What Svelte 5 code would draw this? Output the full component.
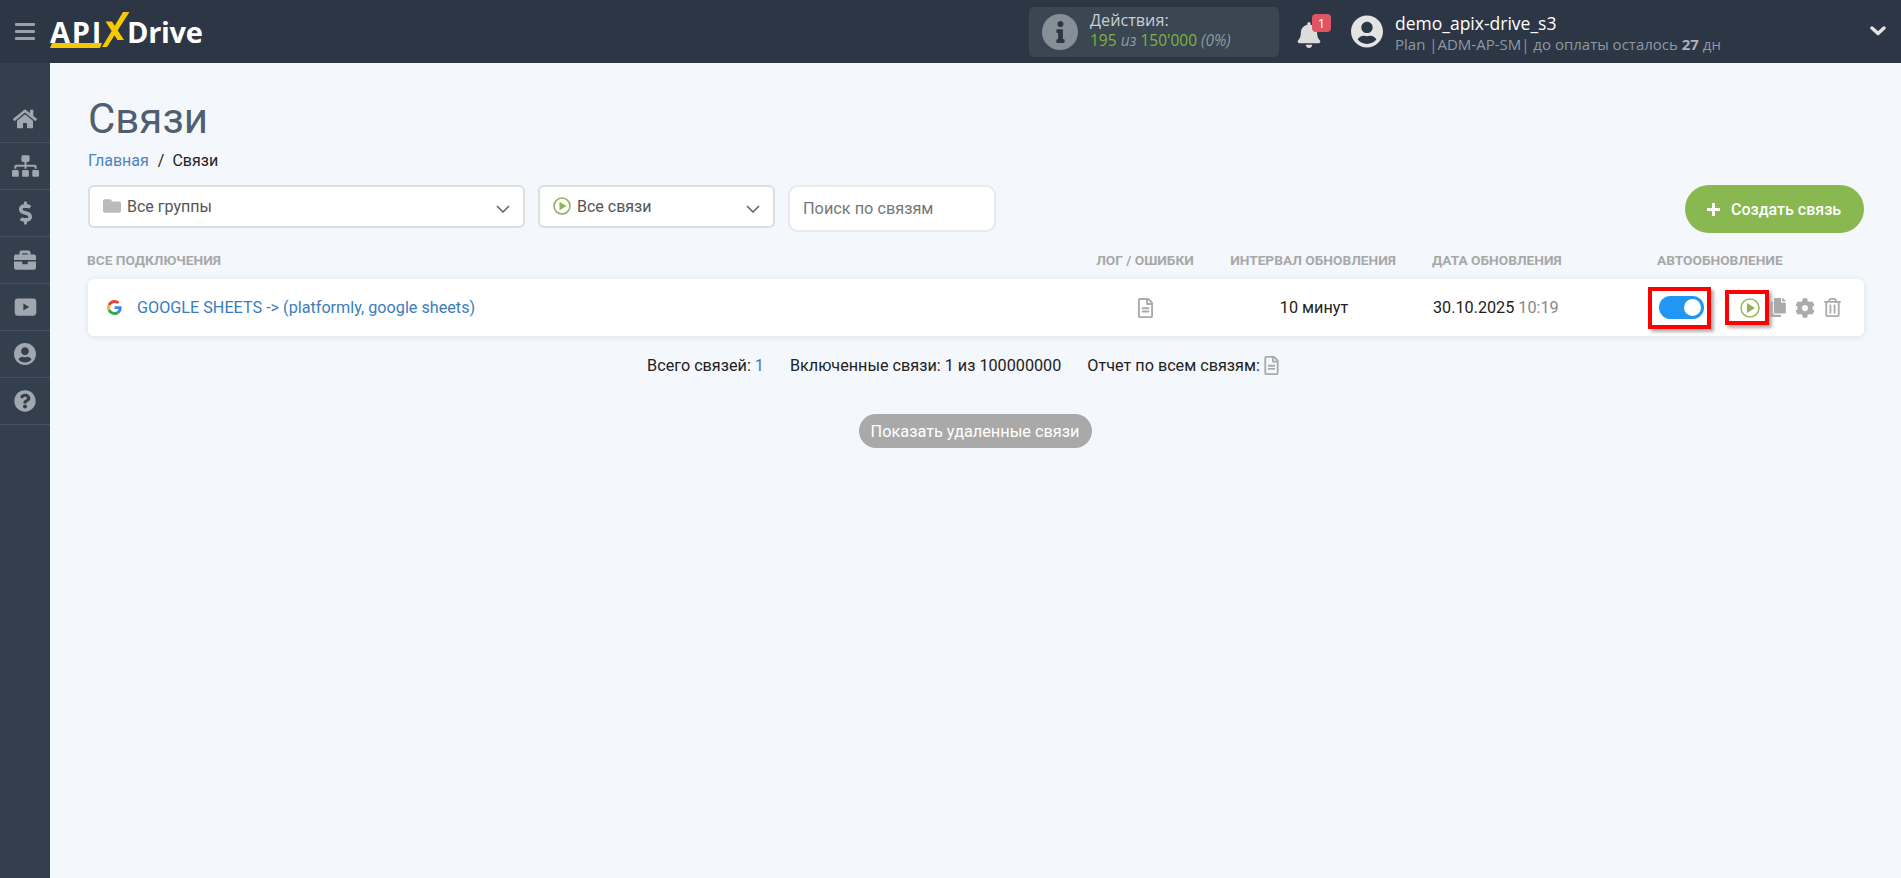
<script>
  const nav = [
    { vb: '0 0 576 512', w: 24, d: 'M280.37 148.26L96 300.11V464a16 16 0 0 0 16 16l112.06-.29a16 16 0 0 0 15.92-16V368a16 16 0 0 1 16-16h64a16 16 0 0 1 16 16v95.64a16 16 0 0 0 16 16.05L464 480a16 16 0 0 0 16-16V300L295.67 148.26a12.19 12.19 0 0 0-15.3 0zM571.6 251.47L488 182.56V44.05a12 12 0 0 0-12-12h-56a12 12 0 0 0-12 12v72.61L318.47 43a48 48 0 0 0-61 0L4.34 251.47a12 12 0 0 0-1.6 16.9l25.5 31A12 12 0 0 0 45.15 301l235.22-193.74a12.19 12.19 0 0 1 15.3 0L530.9 301a12 12 0 0 0 16.9-1.6l25.5-31a12 12 0 0 0-1.7-16.93z' },
    { vb: '0 0 640 512', w: 27, d: 'M128 352H32c-17.67 0-32 14.33-32 32v96c0 17.67 14.33 32 32 32h96c17.67 0 32-14.33 32-32v-96c0-17.67-14.33-32-32-32zm-24-80h192v48h48v-48h192v48h48v-57.59c0-21.17-17.23-38.41-38.41-38.41H344v-64h40c17.67 0 32-14.33 32-32V32c0-17.67-14.33-32-32-32H256c-17.67 0-32 14.33-32 32v96c0 17.67 14.33 32 32 32h40v64H94.41C73.23 224 56 241.23 56 262.41V320h48v-48zm264 80h-96c-17.67 0-32 14.33-32 32v96c0 17.67 14.33 32 32 32h96c17.67 0 32-14.33 32-32v-96c0-17.67-14.33-32-32-32zm240 0h-96c-17.67 0-32 14.33-32 32v96c0 17.67 14.33 32 32 32h96c17.67 0 32-14.33 32-32v-96c0-17.67-14.33-32-32-32z' },
    { vb: '0 0 288 512', w: 13, d: 'M209.2 233.4l-108-31.6C88.7 198.2 80 186.5 80 173.5c0-16.3 13.2-29.5 29.5-29.5h66.3c12.2 0 24.2 3.7 34.2 10.5 6.1 4.1 14.3 3.1 19.5-2l34.8-34c7.1-6.9 6.1-18.4-1.8-24.5C238 74.8 207.4 64.1 176 64V16c0-8.8-7.2-16-16-16h-32c-8.8 0-16 7.2-16 16v48h-2.5C45.8 64-5.4 118.7.5 183.6c4.2 46.1 39.4 83.6 83.8 96.6l102.5 30c12.5 3.7 21.2 15.3 21.2 28.3 0 16.3-13.2 29.5-29.5 29.5h-66.3C100 368 88 364.3 78 357.5c-6.1-4.1-14.3-3.1-19.5 2l-34.8 34c-7.1 6.9-6.1 18.4 1.8 24.5 24.5 19.2 55.1 29.9 86.5 30v48c0 8.8 7.2 16 16 16h32c8.8 0 16-7.2 16-16v-48.2c46.6-.9 90.3-28.6 105.7-72.7 21.5-61.6-14.6-124.8-72.5-141.7z' },
    { vb: '0 0 512 512', w: 22, d: 'M320 336c0 8.84-7.16 16-16 16h-96c-8.84 0-16-7.16-16-16v-48H0v144c0 25.6 22.4 48 48 48h416c25.6 0 48-22.4 48-48V288H320v48zm144-208h-80V80c0-25.6-22.4-48-48-48H176c-25.6 0-48 22.4-48 48v48H48c-25.6 0-48 22.4-48 48v80h512v-80c0-25.6-22.4-48-48-48zm-144 0H192V96h128v32z' },
    { vb: '0 0 512 512', w: 23, d: 'M80 64h352c35 0 64 29 64 64v256c0 35-29 64-64 64H80c-35 0-64-29-64-64V128c0-35 29-64 64-64zm128 112v160l128-80z', rule: 'evenodd' },
    { vb: '0 0 496 512', w: 22, d: 'M248 8C111 8 0 119 0 256s111 248 248 248 248-111 248-248S385 8 248 8zm0 96c48.6 0 88 39.4 88 88s-39.4 88-88 88-88-39.4-88-88 39.4-88 88-88zm0 344c-58.7 0-111.3-26.6-146.5-68.2 18.8-35.4 55.6-59.8 98.5-59.8 2.4 0 4.8.4 7.1 1.1 13 4.2 26.6 6.9 40.9 6.9 14.3 0 28-2.7 40.9-6.9 2.3-.7 4.7-1.1 7.1-1.1 42.9 0 79.7 24.4 98.5 59.8C359.3 421.4 306.7 448 248 448z' },
    { vb: '0 0 512 512', w: 22, d: 'M504 256c0 136.997-111.043 248-248 248S8 392.997 8 256C8 119.083 119.043 8 256 8s248 111.083 248 248zM262.655 90c-54.497 0-89.255 22.957-116.549 63.758-3.536 5.286-2.353 12.415 2.715 16.258l34.699 26.31c5.205 3.947 12.621 3.008 16.665-2.122 17.864-22.658 30.113-35.797 57.303-35.797 20.429 0 45.698 13.148 45.698 32.958 0 14.976-12.363 22.667-32.534 33.976C247.128 238.528 216 254.941 216 296v4c0 6.627 5.373 12 12 12h56c6.627 0 12-5.373 12-12v-1.333c0-28.462 83.186-29.647 83.186-106.667 0-58.002-60.165-102-116.531-102zM256 338c-25.365 0-46 20.635-46 46 0 25.364 20.635 46 46 46s46-20.636 46-46c0-25.365-20.635-46-46-46z' }
  ];
  const fileD = 'M288 248v28c0 6.6-5.4 12-12 12H108c-6.6 0-12-5.4-12-12v-28c0-6.6 5.4-12 12-12h168c6.6 0 12 5.4 12 12zm-12 72H108c-6.6 0-12 5.4-12 12v28c0 6.6 5.4 12 12 12h168c6.6 0 12-5.4 12-12v-28c0-6.6-5.4-12-12-12zm108-188.1V464c0 26.5-21.5 48-48 48H48c-26.5 0-48-21.5-48-48V48C0 21.5 21.5 0 48 0h204.1C264.8 0 277 5.1 286 14.1L369.9 98c9 8.9 14.1 21.2 14.1 33.9zm-128-80V128h76.1L256 51.9zM336 464V176H232c-13.3 0-24-10.7-24-24V48H48v416h288z';
</script>

<div class="page">
  <header class="top">
    <div class="burger"><span></span><span></span><span></span></div>
    <div class="logo">
      <span class="api">API</span>
      <svg class="x" viewBox="0 0 28 36" width="28" height="36"><path d="M21 0h6.5L5 35H0zM3.5 9.5h6.5L22 28h-6.5z" fill="#f5c800"/></svg>
      <span class="drive">Drive</span>
      <svg class="under" viewBox="0 0 52 5" width="52" height="5"><path d="M2 0h50l-2 5H0z" fill="#f5c800"/></svg>
    </div>

    <div class="stats">
      <span class="info"><svg viewBox="0 0 192 512" width="9" height="22"><path fill="#2c3644" d="M20 424.229h20V279.771H20c-11.046 0-20-8.954-20-20V212c0-11.046 8.954-20 20-20h112c11.046 0 20 8.954 20 20v212.229h20c11.046 0 20 8.954 20 20V492c0 11.046-8.954 20-20 20H20c-11.046 0-20-8.954-20-20v-47.771c0-11.046 8.954-20 20-20zM96 0C56.235 0 24 32.235 24 72s32.235 72 72 72 72-32.235 72-72S135.764 0 96 0z"/></svg></span>
      <div class="stat-text">
        <div class="stat-title">Действия:</div>
        <div class="stat-line"><b>195</b> <i>из</i> <b>150'000</b> <i>(0%)</i></div>
      </div>
    </div>

    <div class="bell">
      <svg viewBox="0 0 448 512" width="24" height="26"><path fill="#dcdcdc" d="M224 512c35.32 0 63.97-28.65 63.97-64H160.03c0 35.35 28.65 64 63.97 64zm215.39-149.71c-19.32-20.76-55.47-51.99-55.47-154.29 0-77.7-54.48-139.9-127.94-155.16V32c0-17.67-14.32-32-31.98-32s-31.98 14.33-31.98 32v20.84C118.56 68.1 64.08 130.3 64.08 208c0 102.3-36.15 133.53-55.47 154.29-6 6.45-8.66 14.16-8.61 21.71.11 16.4 12.98 32 32.1 32h383.8c19.12 0 32-15.6 32.1-32 .05-7.55-2.61-15.27-8.61-21.71z"/></svg>
      <span class="badge">1</span>
    </div>

    <svg class="avatar" viewBox="0 0 496 512" width="32" height="33"><path fill="#e4e4e4" d="M248 8C111 8 0 119 0 256s111 248 248 248 248-111 248-248S385 8 248 8zm0 96c48.6 0 88 39.4 88 88s-39.4 88-88 88-88-39.4-88-88 39.4-88 88-88zm0 344c-58.7 0-111.3-26.6-146.5-68.2 18.8-35.4 55.6-59.8 98.5-59.8 2.4 0 4.8.4 7.1 1.1 13 4.2 26.6 6.9 40.9 6.9 14.3 0 28-2.7 40.9-6.9 2.3-.7 4.7-1.1 7.1-1.1 42.9 0 79.7 24.4 98.5 59.8C359.3 421.4 306.7 448 248 448z"/></svg>
    <div class="user">
      <div class="uname">demo_apix-drive_s3</div>
      <div class="uplan">Plan |ADM-AP-SM| до оплаты осталось <b>27</b> дн</div>
    </div>
    <svg class="topchev" viewBox="0 0 16 12" width="16" height="12"><path d="M2 3l6 5.5L14 3" fill="none" stroke="#e4e4e4" stroke-width="3.4" stroke-linecap="round" stroke-linejoin="round"/></svg>
  </header>

  <div class="shell">
    <aside class="side">
      {#each nav as n}
        <div class="nav-item">
          <svg viewBox={n.vb} width={n.w} height="24"><path fill="#a0a7af" fill-rule={n.rule || 'nonzero'} d={n.d}/></svg>
        </div>
      {/each}
    </aside>

    <main class="main">
      <h1>Связи</h1>
      <nav class="crumbs"><a href="#home">Главная</a><span class="sep">/</span><span>Связи</span></nav>

      <div class="filters">
        <div class="select groups">
          <svg viewBox="0 0 512 512" width="18" height="18"><path fill="#bbb" d="M464 128H272l-64-64H48C21.49 64 0 85.49 0 112v288c0 26.51 21.49 48 48 48h416c26.51 0 48-21.49 48-48V176c0-26.51-21.49-48-48-48z"/></svg>
          <span>Все группы</span>
          <svg class="chev" viewBox="0 0 14 8" width="14" height="8"><path d="M1 1l6 6 6-6" fill="none" stroke="#666" stroke-width="1.6"/></svg>
        </div>
        <div class="select links">
          <svg viewBox="0 0 18 18" width="18" height="18"><circle cx="9" cy="9" r="8" fill="none" stroke="#8fb35a" stroke-width="1.6"/><path d="M6.5 4.8v8.4L13.5 9z" fill="#8fb35a"/></svg>
          <span>Все связи</span>
          <svg class="chev" viewBox="0 0 14 8" width="14" height="8"><path d="M1 1l6 6 6-6" fill="none" stroke="#666" stroke-width="1.6"/></svg>
        </div>
        <input class="search" placeholder="Поиск по связям" />
        <button class="create"><span class="plus"></span>Создать связь</button>
      </div>

      <div class="grid heads">
        <div>ВСЕ ПОДКЛЮЧЕНИЯ</div>
        <div class="c">ЛОГ / ОШИБКИ</div>
        <div class="c">ИНТЕРВАЛ ОБНОВЛЕНИЯ</div>
        <div class="d">ДАТА ОБНОВЛЕНИЯ</div>
        <div class="e">АВТООБНОВЛЕНИЕ</div>
      </div>

      <div class="grid row">
        <div class="name">
          <svg viewBox="0 0 48 48" width="15" height="15">
            <path fill="#EA4335" d="M24 9.5c3.54 0 6.71 1.22 9.21 3.6l6.85-6.85C35.9 2.38 30.47 0 24 0 14.62 0 6.51 5.38 2.56 13.22l7.98 6.19C12.43 13.72 17.74 9.5 24 9.5z"/>
            <path fill="#4285F4" d="M46.98 24.55c0-1.57-.15-3.09-.38-4.55H24v9.02h12.94c-.58 2.96-2.26 5.48-4.78 7.18l7.73 6c4.51-4.18 7.09-10.36 7.09-17.65z"/>
            <path fill="#FBBC05" d="M10.53 28.59c-.48-1.45-.76-2.99-.76-4.59s.27-3.14.76-4.59l-7.98-6.19C.92 16.46 0 20.12 0 24c0 3.88.92 7.54 2.56 10.78l7.97-6.19z"/>
            <path fill="#34A853" d="M24 48c6.48 0 11.93-2.13 15.89-5.81l-7.73-6c-2.15 1.45-4.92 2.3-8.16 2.3-6.26 0-11.57-4.22-13.47-9.91l-7.98 6.19C6.51 42.62 14.62 48 24 48z"/>
          </svg>
          <a href="#link">GOOGLE SHEETS -&gt; (platformly, google sheets)</a>
        </div>
        <div class="c"><svg viewBox="0 0 384 512" width="15" height="20"><path fill="#aaa" d={fileD}/></svg></div>
        <div class="c interval">10 минут</div>
        <div class="d date">30.10.2025 <span>10:19</span></div>
        <div class="actions">
          <div class="mark m1"><div class="toggle"><span></span></div></div>
          <div class="mark m2">
            <svg viewBox="0 0 20 20" width="20" height="20"><circle cx="10" cy="10" r="9" fill="none" stroke="#9cba5e" stroke-width="1.6"/><path d="M7 5v10l8-5z" fill="#8fb35a"/></svg>
          </div>
          <svg class="copy" viewBox="0 0 448 512" width="17" height="19"><path fill="#aaa" d="M320 448v40c0 13.255-10.745 24-24 24H24c-13.255 0-24-10.745-24-24V120c0-13.255 10.745-24 24-24h72v296c0 30.879 25.121 56 56 56h168zm0-344V0H152c-13.255 0-24 10.745-24 24v368c0 13.255 10.745 24 24 24h272c13.255 0 24-10.745 24-24V128H344c-13.2 0-24-10.8-24-24zm120.971-31.029L375.029 7.029A24 24 0 0 0 358.059 0H352v96h96v-6.059a24 24 0 0 0-7.029-16.97z"/></svg>
          <svg class="gear" viewBox="0 0 512 512" width="20" height="20"><path fill="#aaa" d="M487.4 315.7l-42.6-24.6c4.3-23.2 4.3-47 0-70.2l42.6-24.6c4.9-2.8 7.1-8.6 5.5-14-11.1-35.6-30-67.8-54.7-94.6-3.8-4.1-10-5.1-14.8-2.3L380.8 110c-17.9-15.4-38.5-27.3-60.8-35.1V25.8c0-5.6-3.9-10.5-9.4-11.7-36.7-8.2-74.3-7.8-109.2 0-5.5 1.2-9.4 6.1-9.4 11.7V75c-22.2 7.9-42.8 19.8-60.8 35.1L88.7 85.5c-4.9-2.8-11-1.9-14.8 2.3-24.7 26.7-43.6 58.9-54.7 94.6-1.7 5.4.6 11.2 5.5 14L67.3 221c-4.3 23.2-4.3 47 0 70.2l-42.6 24.6c-4.9 2.8-7.1 8.6-5.5 14 11.1 35.6 30 67.8 54.7 94.6 3.8 4.1 10 5.1 14.8 2.3l42.6-24.6c17.9 15.4 38.5 27.3 60.8 35.1v49.2c0 5.6 3.9 10.5 9.4 11.7 36.7 8.2 74.3 7.8 109.2 0 5.5-1.2 9.4-6.1 9.4-11.7v-49.2c22.2-7.9 42.8-19.8 60.8-35.1l42.6 24.6c4.9 2.8 11 1.9 14.8-2.3 24.7-26.7 43.6-58.9 54.7-94.6 1.5-5.5-.7-11.3-5.6-14.1zM256 336c-44.1 0-80-35.9-80-80s35.9-80 80-80 80 35.9 80 80-35.9 80-80 80z"/></svg>
          <svg class="trash" viewBox="0 0 448 512" width="17" height="19"><path fill="#aaa" d="M268 416h24a12 12 0 0 0 12-12V188a12 12 0 0 0-12-12h-24a12 12 0 0 0-12 12v216a12 12 0 0 0 12 12zM432 80h-82.41l-34-56.7A48 48 0 0 0 274.41 0H173.59a48 48 0 0 0-41.16 23.3L98.41 80H16A16 16 0 0 0 0 96v16a16 16 0 0 0 16 16h16v336a48 48 0 0 0 48 48h288a48 48 0 0 0 48-48V128h16a16 16 0 0 0 16-16V96a16 16 0 0 0-16-16zM171.84 50.91A6 6 0 0 1 177 48h94a6 6 0 0 1 5.15 2.91L293.61 80H154.39zM368 464H80V128h288zm-212-48h24a12 12 0 0 0 12-12V188a12 12 0 0 0-12-12h-24a12 12 0 0 0-12 12v216a12 12 0 0 0 12 12z"/></svg>
        </div>
      </div>

      <div class="summary">
        <span>Всего связей: <em>1</em></span>
        <span>Включенные связи: 1 из 100000000</span>
        <span class="rep">Отчет по всем связям: <svg viewBox="0 0 384 512" width="15" height="19"><path fill="#aaa" d={fileD}/></svg></span>
      </div>
      <div class="del-wrap"><button class="del">Показать удаленные связи</button></div>
    </main>
  </div>
</div>

<style>
  :global(body) { margin: 0; background: #f4f7fc; font-family: Roboto, "Liberation Sans", sans-serif; }
  .page { height: 878px; display: flex; flex-direction: column; overflow: hidden; }

  .top { height: 63px; flex: none; background: #2c3644; display: flex; align-items: center; position: relative; font-family: "Open Sans", sans-serif; }
  .burger { width: 20px; margin-left: 15px; display: flex; flex-direction: column; gap: 4px; }
  .burger span { display: block; height: 3px; border-radius: 1px; background: #9aa1a8; }
  .logo { display: flex; align-items: center; margin-left: 15px; width: 152px; height: 36px; position: relative; color: #fff; font-weight: 700; font-family: "Open Sans", sans-serif; font-size: 29px; letter-spacing: -0.3px; line-height: 36px; }
  .api { width: 52px; flex: none; margin-top: 1px; letter-spacing: 1.8px; }
  .x { margin-top: -3px; flex: none; }
  .drive { margin-top: 1px; margin-left: -3px; }
  .under { position: absolute; left: 0; bottom: 2px; }

  .stats { margin-left: 827px; width: 250px; height: 50px; box-sizing: border-box; background: #3a4752; border-radius: 5px; display: flex; align-items: center; }
  .info { width: 36px; height: 36px; margin-left: 13px; border-radius: 50%; background: #868e96; display: flex; align-items: center; justify-content: center; flex: none; }
  .stat-text { margin-left: 12px; font-size: 15.5px; line-height: 20px; margin-top: -3px; }
  .stat-title { color: #c8ced4; font-size: 16.2px; }
  .stat-line { color: #8d99a3; }
  .stat-line b { font-weight: 400; color: #7fb13f; }
  .stat-line i { font-style: italic; }

  .bell { width: 34px; height: 36px; margin-left: 18px; position: relative; flex: none; }
  .bell svg { position: absolute; left: 0; top: 8px; }
  .badge { position: absolute; left: 15px; top: 0; width: 19px; height: 18px; border-radius: 4px; background: #e05563; color: #fff; font-size: 13px; line-height: 18px; text-align: center; }

  .avatar { margin-left: 20px; flex: none; }
  .user { margin-left: 12px; margin-top: 2px; }
  .uname { color: #fff; font-size: 17.5px; line-height: 22px; }
  .uplan { color: #8d99a3; font-size: 15px; line-height: 20px; white-space: nowrap; }
  .uplan b { color: #aab2ba; font-weight: 700; }
  .topchev { position: absolute; right: 15px; top: 25px; }

  .shell { flex: 1; display: flex; min-height: 0; }
  .side { width: 50px; flex: none; background: #343f4e; padding-top: 33px; box-sizing: border-box; }
  .nav-item { height: 47px; border-bottom: 1px solid #46505e; box-sizing: border-box; display: flex; align-items: center; justify-content: center; }

  .main { flex: 1; padding: 0 37px 0 38px; min-width: 0; }
  h1 { margin: 33px 0 0; font-size: 42px; line-height: 46px; font-weight: 400; color: #4f5f6f; }
  .crumbs { margin-top: 9px; font-size: 16px; line-height: 20px; color: #222; }
  .crumbs a { color: #4a86c0; text-decoration: none; }
  .sep { margin: 0 8px 0 9px; }

  .filters { display: flex; align-items: flex-start; margin-top: 14px; }
  .select { height: 43px; box-sizing: border-box; background: #fff; border: 2px solid #dcdee2; border-radius: 6px; display: flex; align-items: center; padding-left: 13px; position: relative; font-size: 16px; color: #555; }
  .select span { margin-left: 6px; margin-top: -1px; }
  .select > svg:first-child { margin-top: -2px; }
  .chev { position: absolute; right: 13px; top: 18px; }
  .groups { width: 437px; }
  .links { width: 237px; margin-left: 13px; }
  .search { width: 208px; height: 47px; box-sizing: border-box; margin-left: 13px; background: #fff; border: 2px solid #e8eaee; border-radius: 10px; padding: 0 0 0 13px; font: 16.3px Roboto, sans-serif; outline: none; }
  .search::placeholder { color: #777; opacity: 1; }
  .create { margin-left: auto; width: 179px; height: 48px; border: 0; border-radius: 24px; background: #88b84f; color: #fff; font: 500 16px Roboto, sans-serif; display: flex; align-items: center; padding: 0 0 0 22px; box-sizing: border-box; }
  .plus { width: 13px; height: 13px; margin-right: 11px; flex: none; background: linear-gradient(#fff,#fff) center/100% 3px no-repeat, linear-gradient(#fff,#fff) center/3px 100% no-repeat; }

  .grid { display: grid; grid-template-columns: 1002px 112px 224px 222px 1fr; align-items: center; margin-left: -1px; }
  .heads { margin-top: 15px; height: 24px; font-size: 13.7px; font-weight: 700; color: #a8a8a8; white-space: nowrap; }
  .c { text-align: center; }
  .d { padding-left: 7px; }
  .e { padding-left: 10px; }
  .row { margin-top: 7px; margin-left: 0; grid-template-columns: 1001px 112px 224px 222px 1fr; height: 57px; background: #fff; border-radius: 6px; box-shadow: 0 1px 6px rgba(60,70,90,.12); font-size: 16.2px; color: #222; }
  .row .d { padding-left: 8px; }
  .interval { padding-left: 2px; }
  .name { display: flex; align-items: center; padding-left: 19px; }
  .name a { margin-left: 15px; color: #3a7dbd; text-decoration: none; white-space: nowrap; }
  .name svg { flex: none; }
  .c svg { display: block; margin: 0 auto; }
  .date span { color: #888; }
  .actions { display: flex; align-items: center; padding-left: 1px; }
  .mark { box-sizing: border-box; border: 4px solid #f00; box-shadow: 3px 3px 3px rgba(0,0,0,.3); display: flex; align-items: center; flex: none; }
  .m1 { width: 63px; height: 42px; padding-left: 7px; }
  .m2 { width: 44px; height: 35px; margin-left: 14px; padding-left: 11px; }
  .toggle { width: 45px; height: 23px; background: #2196f3; border-radius: 12px; position: relative; }
  .toggle span { position: absolute; right: 3px; top: 3px; width: 17px; height: 17px; background: #fff; border-radius: 50%; }
  .copy { flex: none; }
  .gear { margin-left: 9px; flex: none; }
  .trash { margin-left: 9px; flex: none; }

  .summary { margin-top: 18px; height: 22px; display: flex; justify-content: center; align-items: center; font-size: 16.2px; color: #222; gap: 26px; padding-right: 26px; }
  .summary em { font-style: normal; color: #3a7dbd; }
  .rep { display: inline-flex; align-items: center; gap: 4px; }
  .del-wrap { margin-top: 38px; display: flex; justify-content: center; padding-right: 2px; }
  .del { width: 233px; height: 34px; border: 0; border-radius: 17px; background: #a9a9a9; color: #fff; font: 400 16.3px Roboto, sans-serif; padding: 0; }
</style>
